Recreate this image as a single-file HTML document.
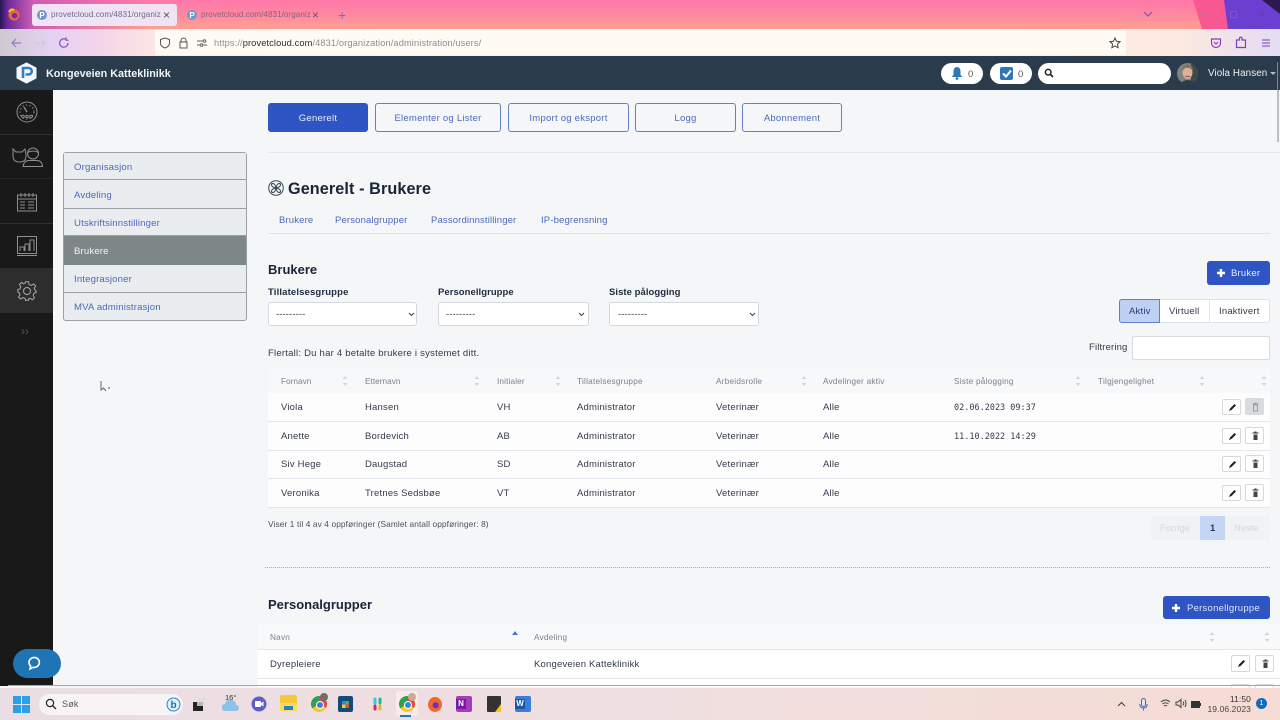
<!DOCTYPE html>
<html><head><meta charset="utf-8">
<style>
html,body{margin:0;padding:0;width:1280px;height:720px;overflow:hidden;background:#f4f6f7}
body{position:relative;font-family:"Liberation Sans","DejaVu Sans",sans-serif;font-size:9.5px;color:#2a3342}
.a{position:absolute}
.t{position:absolute;white-space:nowrap;line-height:0;height:0;transform:translateY(2px)}
.t.k{transform:translateY(1px)}
.tab{font-size:8.1px;letter-spacing:.05px;color:#6d6d8c}
.b{position:absolute;box-sizing:border-box;height:29px;border:1px solid #6580c2;border-radius:3px;text-align:center;line-height:29px;color:#4d6bbf;font-size:9.5px;letter-spacing:.25px;background:#f4f6f7}
.p{background:#2f55c4;border-color:#2f55c4;color:#e8eefc}
.m{position:absolute;left:64px;width:182px;height:27px;box-sizing:border-box;background:#eaedf0;border-bottom:1px solid #9aa0a3;line-height:27px;padding:1px 0 0 10px;color:#4a69bd;font-size:9.6px;letter-spacing:.15px}
.l{font-size:9.5px;color:#4a69bd;letter-spacing:.15px}
.lb{font-size:9.5px;font-weight:bold;color:#1f2a40;letter-spacing:.15px}
.s{position:absolute;top:302px;height:24px;width:149px;box-sizing:border-box;background:#fff;border:1px solid #d5d8dc;border-radius:3px}
.th{font-size:8.2px;color:#79828f;letter-spacing:.25px}
.td{font-size:9.5px;color:#333b4a;letter-spacing:.2px}
.r{position:absolute;left:268px;width:1002px;height:28px;background:#fdfdfd;border-bottom:1px solid #e3e6ea;box-sizing:border-box}
.ib{position:absolute;width:19px;height:16px;box-sizing:border-box;background:#fff;border:1px solid #d6d9dc;border-radius:2px}
.ib svg{position:absolute;left:4px;top:2px}
.mono{font-family:"DejaVu Sans Mono","Liberation Mono",monospace;font-size:8.500px;letter-spacing:0;color:#333b4a}
</style></head><body>

<!-- browser chrome -->
<div class="a" style="left:0;top:0;width:1280px;height:29px;background:linear-gradient(180deg,#ff78a8 0%,#ff86a2 45%,#ffa092 100%)"></div>
<div class="a" style="left:0;top:0;width:150px;height:29px;background:linear-gradient(90deg,#2a1650 0,#6a2a9c 5%,#cf5db4 22%,rgba(255,120,168,0) 100%)"></div>
<svg class="a" style="left:1190px;top:0" width="90" height="29"><path d="M3 0H37L39 29H12Z" fill="#f9578f"/><path d="M34 0H90V29H38Z" fill="#6b3fd0"/><path d="M72 0H90V14Z" fill="#2a1a50"/></svg>
<div class="a" style="left:0;top:29px;width:1280px;height:27px;background:linear-gradient(90deg,#cfc9cf 0,#e3d2f2 4%,#f5d5ea 8%,#ffeedd 14%,#fff3e6 70%,#fde9df 92%,#e3dcf3 100%)"></div>
<div class="a" style="left:155px;top:30px;width:971px;height:25px;background:#fffaf3"></div>
<div class="a" style="left:32px;top:4px;width:145px;height:22px;background:#efe3f5;border-radius:3px"></div>
<svg class="a" style="left:7px;top:8px" width="14" height="14"><circle cx="7" cy="7" r="5.500" fill="#f0692a"/><circle cx="7.600" cy="7.600" r="2.800" fill="#6b2fb5"/><path d="M2 4Q4 0 7 2" stroke="#ffc13a" stroke-width="2" fill="none"/></svg>
<svg class="a" style="left:37px;top:10px" width="10" height="10"><circle cx="5" cy="5" r="5" fill="#6c98cc"/><text x="5" y="8" font-size="8" font-weight="bold" fill="#fff" text-anchor="middle" font-family="Liberation Sans">P</text></svg>
<div class="t k tab" style="left:51px;top:14px">provetcloud.com/4831/organiz</div>
<div class="t k" style="left:163px;top:14px;font-size:12px;color:#555">×</div>
<svg class="a" style="left:187px;top:10px" width="10" height="10"><circle cx="5" cy="5" r="5" fill="#6c98cc"/><text x="5" y="8" font-size="8" font-weight="bold" fill="#fff" text-anchor="middle" font-family="Liberation Sans">P</text></svg>
<div class="t k tab" style="left:201px;top:14px;color:#8a5f7e">provetcloud.com/4831/organiz</div>
<div class="t k" style="left:312px;top:14px;font-size:12px;color:#6d5070">×</div>
<div class="t k" style="left:338px;top:14px;font-size:14px;color:#8a63c8">+</div>
<svg class="a" style="left:1143px;top:10px" width="10" height="8"><path d="M1 2L5 6L9 2" stroke="#8b4fb0" stroke-width="1.200" fill="none"/></svg>
<div class="a" style="left:1199px;top:14px;width:8px;height:1px;background:#d06a98"></div>
<div class="a" style="left:1230px;top:11px;width:7px;height:7px;border:1px solid #9a58b8;box-sizing:border-box;opacity:.7"></div>
<div class="t k" style="left:1259px;top:13px;font-size:9px;color:#5a3a98">×</div>
<svg class="a" style="left:10px;top:37px" width="12" height="12"><path d="M11 6H2M6 2L2 6L6 10" stroke="#8d7fd0" stroke-width="1.200" fill="none"/></svg>
<svg class="a" style="left:35px;top:37px" width="12" height="12"><path d="M1 6H10M6 2L10 6L6 10" stroke="#d5c4ea" stroke-width="1.200" fill="none"/></svg>
<svg class="a" style="left:58px;top:37px" width="12" height="12"><path d="M10 6A4.200 4.200 0 1 1 8 2.400M8 .5V3.200H10.700" stroke="#8e4fc0" stroke-width="1.200" fill="none"/></svg>
<svg class="a" style="left:159px;top:37px" width="12" height="12"><path d="M6 1L10.500 2.500V6Q10.500 9.500 6 11Q1.500 9.500 1.500 6V2.500Z" stroke="#555" stroke-width="1" fill="none"/></svg>
<svg class="a" style="left:178px;top:37px" width="11" height="12"><path d="M3 5V3.500A2.500 2.500 0 0 1 8 3.500V5M2 5H9V11H2Z" stroke="#555" stroke-width="1" fill="none"/></svg>
<svg class="a" style="left:197px;top:38px" width="10" height="10"><path d="M0 3H6M0 7H3M6 7H10" stroke="#666" stroke-width="1"/><circle cx="7.500" cy="3" r="1.300" fill="none" stroke="#666"/><circle cx="4.500" cy="7" r="1.300" fill="none" stroke="#666"/></svg>
<div class="t k" style="left:214px;top:42px;font-size:9.300px;letter-spacing:.1px;color:#8b8f97">https://<span style="color:#2c2c33">provetcloud.com</span>/4831/organization/administration/users/</div>
<svg class="a" style="left:1109px;top:37px" width="12" height="12"><path d="M6 1L7.500 4.300L11 4.700L8.400 7.100L9.100 10.700L6 8.900L2.900 10.700L3.600 7.100L1 4.700L4.500 4.300Z" stroke="#444" stroke-width="1" fill="none"/></svg>
<svg class="a" style="left:1210px;top:37px" width="12" height="12"><path d="M1.500 2H10.500V6A4.500 4.500 0 0 1 1.500 6Z" stroke="#8b3fc0" stroke-width="1.200" fill="none"/><path d="M4 5L6 7L8 5" stroke="#8b3fc0" stroke-width="1.200" fill="none"/></svg>
<svg class="a" style="left:1235px;top:36px" width="12" height="13"><path d="M1.500 4H4.500V2A1.300 1.300 0 0 1 7 2V4H10.500V11.500H1.500Z" stroke="#7b3fc8" stroke-width="1.200" fill="none"/></svg>
<svg class="a" style="left:1261px;top:38px" width="10" height="10"><path d="M1 2H9M1 5H9M1 8H9" stroke="#7b3fc8" stroke-width="1.100"/></svg>

<!-- app top bar -->
<div class="a" style="left:0;top:56px;width:1280px;height:34px;background:#2a3c4b"></div>
<svg class="a" style="left:16px;top:62px" width="21" height="22"><path d="M10.500 1L20 6V16L10.500 21L1 16V6Z" fill="#f5f8fb" stroke="#f5f8fb" stroke-linejoin="round"/><path d="M7 16V6H12.500A3.200 3.200 0 0 1 12.500 12.500H9.500" stroke="#2e80c5" stroke-width="2.600" fill="none"/></svg>
<div class="t" style="left:46px;top:72px;font-size:10.800px;font-weight:bold;color:#f2f5f7">Kongeveien Katteklinikk</div>
<div class="a" style="left:941px;top:63px;width:42px;height:21px;background:#fff;border-radius:11px"></div>
<svg class="a" style="left:950px;top:66px" width="14" height="14"><path d="M7 1Q10.500 1 10.500 6V9L12.500 11H1.500L3.500 9V6Q3.500 1 7 1Z" fill="#2f78b8"/><circle cx="7" cy="12.500" r="1.400" fill="#2f78b8"/></svg>
<div class="t" style="left:968px;top:73px;font-size:9.500px;color:#555">0</div>
<div class="a" style="left:990px;top:63px;width:42px;height:21px;background:#fff;border-radius:11px"></div>
<div class="a" style="left:1000px;top:67px;width:13px;height:13px;background:#2f78b8;border-radius:2px"></div>
<svg class="a" style="left:1000px;top:67px" width="14" height="13"><path d="M3 6.500L6 9.500L11 3.500" stroke="#fff" stroke-width="2" fill="none"/></svg>
<div class="t" style="left:1018px;top:73px;font-size:9.500px;color:#555">0</div>
<div class="a" style="left:1038px;top:63px;width:133px;height:21px;background:#fff;border-radius:11px"></div>
<svg class="a" style="left:1044px;top:68px" width="10" height="10"><circle cx="4.200" cy="4.200" r="2.800" stroke="#222" stroke-width="1.500" fill="none"/><path d="M6.500 6.500L9 9" stroke="#222" stroke-width="1.600"/></svg>
<svg class="a" style="left:1177px;top:63px" width="21" height="21"><defs><clipPath id="av"><circle cx="10.500" cy="10.500" r="10.500"/></clipPath></defs><g clip-path="url(#av)"><rect width="21" height="21" fill="#7c8580"/><rect x="14" width="7" height="21" fill="#3d4a48"/><path d="M4 20Q10 14 19 20V21H4Z" fill="#2c3e3e"/><ellipse cx="10.500" cy="9.500" rx="5" ry="6.500" fill="#d9b09c"/><path d="M5 8Q6 1 11 2Q16 2 16 8Q13 4 8 5Z" fill="#8a6f60"/><path d="M8 13.500H13" stroke="#a5504a" stroke-width="1"/></g></svg>
<div class="t" style="left:1208px;top:72px;font-size:9.800px;color:#eef1f3;letter-spacing:.1px">Viola Hansen</div>
<div class="a" style="left:1270px;top:72px;border:3px solid transparent;border-top-color:#b5bcc2"></div>
<div class="a" style="left:1277px;top:62px;width:1px;height:28px;background:#7b8893"></div>

<!-- sidebar -->
<div class="a" style="left:0;top:90px;width:53px;height:596px;background:#191919"></div>
<div class="a" style="left:0;top:134px;width:53px;height:1px;background:#303030"></div>
<div class="a" style="left:0;top:178px;width:53px;height:1px;background:#262626"></div>
<div class="a" style="left:0;top:223px;width:53px;height:1px;background:#303030"></div>
<div class="a" style="left:0;top:268px;width:53px;height:45px;background:#2d2d2d"></div>
<svg class="a" style="left:16px;top:101px" width="22" height="22" fill="none" stroke="#8f8f8f"><circle cx="11" cy="11" r="10"/><circle cx="11" cy="11" r="7" stroke-dasharray="1.500 2"/><path d="M11 11L8 6" stroke-width="1.300"/><circle cx="7" cy="15.500" r="1.300"/><circle cx="11" cy="15.500" r="1.300"/><circle cx="15" cy="15.500" r="1.300"/></svg>
<svg class="a" style="left:12px;top:146px" width="31" height="22" fill="none" stroke="#8f8f8f"><path d="M1 3L4 6H10L13 3Q14 8 14 10Q14 16 7.500 16Q1 16 1 10Q1 8 1 3Z"/><circle cx="21" cy="7.500" r="5.500"/><path d="M15.500 6.500Q21 3.500 26.500 6.500"/><path d="M11 20.500Q12 14.500 17 14.500H25Q30 14.500 30.500 20.500Z"/></svg>
<svg class="a" style="left:17px;top:192px" width="20" height="20" fill="none" stroke="#8f8f8f"><rect x=".5" y="3" width="19" height="16"/><path d="M0 7H20M4 1V5M8 1V5M12 1V5M16 1V5M3 10H8M11 10H17M3 13H8M11 13H17M3 16H8M11 16H17"/></svg>
<svg class="a" style="left:17px;top:236px" width="20" height="20" fill="none" stroke="#8f8f8f"><rect x=".5" y=".5" width="19" height="17"/><path d="M0 19.500H20"/><path d="M3 15V11H7V15M8 15V8H12V15M13 15V4H17V15"/></svg>
<svg class="a" style="left:17px;top:281px" width="20" height="20" fill="none" stroke="#a8a8a8"><circle cx="10" cy="10" r="3.500"/><path d="M8.500 .8H11.500L12 3.400L14.400 4.400L16.600 2.900L18.700 5L17.200 7.200L18.200 9.600L19.200 10.100V11.500L17 12.200L16.200 14.600L17.500 16.800L15.400 18.800L13.200 17.300L11.500 18V19.300H8.500L8 17.400L5.800 16.600L3.600 18L1.500 16L3 13.800L2 11.500L.8 11V8.500L3 8L3.800 5.600L2.400 3.400L4.500 1.400L6.700 2.800L8 2.300Z"/></svg>
<div class="t k" style="left:21px;top:330px;font-size:12px;color:#555;letter-spacing:0">››</div>
<div class="a" style="left:13px;top:649px;width:48px;height:29px;background:#1f74b4;border-radius:15px"></div>
<svg class="a" style="left:27px;top:656px" width="15" height="15" fill="none" stroke="#fff" stroke-width="1.600"><path d="M3 13L3.600 10Q2 8.500 2 6.500A5.200 5 0 1 1 6 11.300Z"/></svg>

<!-- left menu -->
<div class="a" style="left:63px;top:152px;width:184px;height:169px;box-sizing:border-box;border:1px solid #9aa0a3;border-radius:3px;background:#eaedf0;overflow:hidden"></div>
<div class="m" style="top:153px">Organisasjon</div>
<div class="m" style="top:181px;height:28px">Avdeling</div>
<div class="m" style="top:209px;height:27px">Utskriftsinnstillinger</div>
<div class="m" style="top:236px;height:29px;background:#7d8788;color:#f2f4f4;border:0;line-height:29px">Brukere</div>
<div class="m" style="top:265px;height:28px">Integrasjoner</div>
<div class="m" style="top:293px;height:27px;border-bottom:0;border-radius:0 0 3px 3px">MVA administrasjon</div>

<!-- top buttons -->
<div class="b p" style="left:268px;top:103px;width:100px">Generelt</div>
<div class="b" style="left:375px;top:103px;width:126px">Elementer og Lister</div>
<div class="b" style="left:508px;top:103px;width:121px">Import og eksport</div>
<div class="b" style="left:635px;top:103px;width:101px">Logg</div>
<div class="b" style="left:742px;top:103px;width:100px">Abonnement</div>
<div class="a" style="left:268px;top:152px;width:1012px;height:1px;background:#e6e9eb"></div>

<!-- heading -->
<svg class="a" style="left:268px;top:180px" width="16" height="16" fill="none" stroke="#3a4456"><circle cx="8" cy="8" r="7.300"/><path d="M8 8Q3.500 7 3.500 5Q3.500 3.500 5 3.500Q7 3.500 8 8Q9 3.500 11 3.500Q12.500 3.500 12.500 5Q12.500 7 8 8Q12.500 9 12.500 11Q12.500 12.500 11 12.500Q9 12.500 8 8Q7 12.500 5 12.500Q3.500 12.500 3.500 11Q3.500 9 8 8Z"/></svg>
<div class="t k" style="left:288px;top:188px;font-size:16.200px;font-weight:bold;color:#1a2338;letter-spacing:.1px">Generelt - Brukere</div>
<div class="t l" style="left:279px;top:219px">Brukere</div>
<div class="t l" style="left:335px;top:219px">Personalgrupper</div>
<div class="t l" style="left:431px;top:219px">Passordinnstillinger</div>
<div class="t l" style="left:541px;top:219px">IP-begrensning</div>
<div class="a" style="left:268px;top:233px;width:1002px;height:1px;background:#e0e3e6"></div>

<div class="t" style="left:268px;top:268px;font-size:13px;font-weight:bold;color:#1a2338">Brukere</div>
<div class="a" style="left:1207px;top:261px;width:63px;height:24px;background:#2f55c4;border-radius:3px"></div>
<svg class="a" style="left:1216px;top:268px" width="10" height="10"><path d="M5 1V9M1 5H9" stroke="#fff" stroke-width="2.400"/></svg>
<div class="t" style="left:1231px;top:272px;font-size:9.500px;color:#e8eefc;letter-spacing:.2px">Bruker</div>

<div class="t lb" style="left:268px;top:291px">Tillatelsesgruppe</div>
<div class="t lb" style="left:438px;top:291px;letter-spacing:.05px">Personellgruppe</div>
<div class="t lb" style="left:609px;top:291px;letter-spacing:.05px">Siste pålogging</div>
<div class="s" style="left:268px"></div><div class="s" style="left:438px;width:151px"></div><div class="s" style="left:609px;width:150px"></div>
<div class="t td" style="left:276px;top:313px;letter-spacing:.1px">---------</div>
<div class="t td" style="left:446px;top:313px;letter-spacing:.1px">---------</div>
<div class="t td" style="left:618px;top:313px;letter-spacing:.1px">---------</div>
<svg class="a" style="left:408px;top:312px" width="7" height="5"><path d="M1 1L3.500 3.500L6 1" stroke="#444" stroke-width="1.100" fill="none"/></svg>
<svg class="a" style="left:578px;top:312px" width="7" height="5"><path d="M1 1L3.500 3.500L6 1" stroke="#444" stroke-width="1.100" fill="none"/></svg>
<svg class="a" style="left:749px;top:312px" width="7" height="5"><path d="M1 1L3.500 3.500L6 1" stroke="#444" stroke-width="1.100" fill="none"/></svg>

<!-- active group -->
<div class="a" style="left:1119px;top:299px;width:151px;height:24px;box-sizing:border-box;background:#fff;border:1px solid #e0e3e6;border-radius:3px"></div>
<div class="a" style="left:1119px;top:299px;width:41px;height:24px;box-sizing:border-box;background:#bfd0f5;border:1px solid #5f7ecb;border-radius:3px 0 0 3px"></div>
<div class="a" style="left:1209px;top:299px;width:1px;height:24px;background:#e0e3e6"></div>
<div class="t td" style="left:1129px;top:310px;color:#27406f">Aktiv</div>
<div class="t td" style="left:1169px;top:310px">Virtuell</div>
<div class="t td" style="left:1219px;top:310px">Inaktivert</div>

<div class="t td" style="left:268px;top:352px;letter-spacing:.23px">Flertall: Du har 4 betalte brukere i systemet ditt.</div>
<div class="t td" style="left:1089px;top:346px;letter-spacing:.15px">Filtrering</div>
<div class="a" style="left:1132px;top:336px;width:138px;height:24px;box-sizing:border-box;background:#fff;border:1px solid #d8dbdf;border-radius:2px"></div>

<!-- users table -->
<div class="a" style="left:268px;top:368px;width:1002px;height:25px;background:#f6f8f9"></div>
<div class="t th" style="left:281px;top:380px;letter-spacing:.05px">Fornavn</div>
<div class="t th" style="left:365px;top:380px;letter-spacing:.05px">Etternavn</div>
<div class="t th" style="left:497px;top:380px;letter-spacing:.15px">Initialer</div>
<div class="t th" style="left:577px;top:380px">Tillatelsesgruppe</div>
<div class="t th" style="left:716px;top:380px">Arbeidsrolle</div>
<div class="t th" style="left:823px;top:380px">Avdelinger aktiv</div>
<div class="t th" style="left:954px;top:380px">Siste pålogging</div>
<div class="t th" style="left:1098px;top:380px">Tilgjengelighet</div>
<svg class="a" style="left:340px;top:376px" width="930" height="10" fill="#d3d7db"><path transform="translate(3)" d="M2 0L4.500 3H-.5ZM2 10L4.500 7H-.5Z"/><path transform="translate(135)" d="M2 0L4.500 3H-.5ZM2 10L4.500 7H-.5Z"/><path transform="translate(216)" d="M2 0L4.500 3H-.5ZM2 10L4.500 7H-.5Z"/><path transform="translate(462)" d="M2 0L4.500 3H-.5ZM2 10L4.500 7H-.5Z"/><path transform="translate(736)" d="M2 0L4.500 3H-.5ZM2 10L4.500 7H-.5Z"/><path transform="translate(860)" d="M2 0L4.500 3H-.5ZM2 10L4.500 7H-.5Z"/><path transform="translate(922)" d="M2 0L4.500 3H-.5ZM2 10L4.500 7H-.5Z"/></svg>

<div class="r" style="top:393px;height:29px"></div>
<div class="r" style="top:422px;height:29px"></div>
<div class="r" style="top:451px;height:28px"></div>
<div class="r" style="top:479px;height:29px"></div>

<div class="t td" style="left:281px;top:406px">Viola</div><div class="t td" style="left:365px;top:406px">Hansen</div><div class="t td" style="left:497px;top:406px">VH</div><div class="t td" style="left:577px;top:406px">Administrator</div><div class="t td" style="left:716px;top:406px">Veterinær</div><div class="t td" style="left:823px;top:406px">Alle</div>
<div class="t mono" style="left:954px;top:406px">02.06.2023 09:37</div>
<div class="t td" style="left:281px;top:435px">Anette</div><div class="t td" style="left:365px;top:435px">Bordevich</div><div class="t td" style="left:497px;top:435px">AB</div><div class="t td" style="left:577px;top:435px">Administrator</div><div class="t td" style="left:716px;top:435px">Veterinær</div><div class="t td" style="left:823px;top:435px">Alle</div>
<div class="t mono" style="left:954px;top:435px">11.10.2022 14:29</div>
<div class="t td" style="left:281px;top:463px">Siv Hege</div><div class="t td" style="left:365px;top:463px">Daugstad</div><div class="t td" style="left:497px;top:463px">SD</div><div class="t td" style="left:577px;top:463px">Administrator</div><div class="t td" style="left:716px;top:463px">Veterinær</div><div class="t td" style="left:823px;top:463px">Alle</div>
<div class="t td" style="left:281px;top:492px">Veronika</div><div class="t td" style="left:365px;top:492px">Tretnes Sedsbøe</div><div class="t td" style="left:497px;top:492px">VT</div><div class="t td" style="left:577px;top:492px">Administrator</div><div class="t td" style="left:716px;top:492px">Veterinær</div><div class="t td" style="left:823px;top:492px">Alle</div>

<!-- row buttons -->
<div class="ib" style="left:1222px;top:399px"><svg width="11" height="11"><path d="M2 9L3 6.500L7.500 2L9 3.500L4.500 8Z" fill="#222"/></svg></div>
<div class="ib" style="left:1245px;top:398px;height:17px;background:#d9dcde;border-color:#d9dcde"><svg width="11" height="11"><path d="M2.500 3H8.500M4.500 2H6.500M3.500 4H7.500V10H3.500Z" stroke="#9ba1a3" fill="none"/></svg></div>
<div class="ib" style="left:1222px;top:428px"><svg width="11" height="11"><path d="M2 9L3 6.500L7.500 2L9 3.500L4.500 8Z" fill="#222"/></svg></div>
<div class="ib" style="left:1245px;top:427px;height:17px"><svg width="11" height="11"><path d="M2.500 3H8.500M4.500 2H6.500" stroke="#333"/><path d="M3.500 4.500H7.500V10H3.500Z" fill="#444"/></svg></div>
<div class="ib" style="left:1222px;top:456px"><svg width="11" height="11"><path d="M2 9L3 6.500L7.500 2L9 3.500L4.500 8Z" fill="#222"/></svg></div>
<div class="ib" style="left:1245px;top:455px;height:17px"><svg width="11" height="11"><path d="M2.500 3H8.500M4.500 2H6.500" stroke="#333"/><path d="M3.500 4.500H7.500V10H3.500Z" fill="#444"/></svg></div>
<div class="ib" style="left:1222px;top:485px"><svg width="11" height="11"><path d="M2 9L3 6.500L7.500 2L9 3.500L4.500 8Z" fill="#222"/></svg></div>
<div class="ib" style="left:1245px;top:484px;height:17px"><svg width="11" height="11"><path d="M2.500 3H8.500M4.500 2H6.500" stroke="#333"/><path d="M3.500 4.500H7.500V10H3.500Z" fill="#444"/></svg></div>

<div class="t k" style="left:268px;top:523px;font-size:8.300px;color:#4a5260;letter-spacing:.12px">Viser 1 til 4 av 4 oppføringer (Samlet antall oppføringer: 8)</div>
<div class="a" style="left:1151px;top:516px;width:119px;height:24px;background:#f0f2f4;border-radius:2px"></div>
<div class="a" style="left:1200px;top:516px;width:25px;height:24px;background:#c5d5f5"></div>
<div class="t" style="left:1160px;top:527px;font-size:9.500px;color:#d3d7dc">Forrige</div>
<div class="t" style="left:1210px;top:527px;font-size:9.500px;font-weight:bold;color:#2a3a5c">1</div>
<div class="t" style="left:1234px;top:527px;font-size:9.500px;color:#d3d7dc">Neste</div>

<div class="a" style="left:265px;top:567px;width:1005px;border-top:1.500px dotted #a3a9ae"></div>

<!-- personalgrupper -->
<div class="t" style="left:268px;top:603px;font-size:13px;font-weight:bold;color:#1a2338">Personalgrupper</div>
<div class="a" style="left:1163px;top:596px;width:107px;height:23px;background:#2f55c4;border-radius:3px"></div>
<svg class="a" style="left:1171px;top:603px" width="10" height="10"><path d="M5 1V9M1 5H9" stroke="#fff" stroke-width="2.400"/></svg>
<div class="t" style="left:1187px;top:607px;font-size:9.500px;color:#dbe4fa;letter-spacing:.25px">Personellgruppe</div>
<div class="a" style="left:258px;top:624px;width:1022px;height:25px;background:#f7f9fa;border-bottom:1px solid #e3e6ea"></div>
<div class="t th" style="left:270px;top:636px">Navn</div>
<div class="t th" style="left:534px;top:636px">Avdeling</div>
<svg class="a" style="left:512px;top:631px" width="6" height="5"><path d="M3 0L6 4H0Z" fill="#4f71c8"/></svg>
<svg class="a" style="left:1209px;top:632px" width="62" height="10" fill="#d3d7db"><path d="M3 0L5.500 3H.5ZM3 10L5.500 7H.5Z"/><path transform="translate(55)" d="M3 0L5.500 3H.5ZM3 10L5.500 7H.5Z"/></svg>
<div class="a" style="left:258px;top:650px;width:1022px;height:28px;background:#fff;border-bottom:1px solid #e3e6ea"></div>
<div class="t td" style="left:270px;top:663px">Dyrepleiere</div>
<div class="t td" style="left:534px;top:663px">Kongeveien Katteklinikk</div>
<div class="ib" style="left:1231px;top:655px;height:17px"><svg width="11" height="11"><path d="M2 9L3 6.500L7.500 2L9 3.500L4.500 8Z" fill="#222"/></svg></div>
<div class="ib" style="left:1255px;top:655px;height:17px"><svg width="11" height="11"><path d="M2.500 3H8.500M4.500 2H6.500" stroke="#333"/><path d="M3.500 4.500H7.500V10H3.500Z" fill="#444"/></svg></div>
<div class="a" style="left:258px;top:679px;width:1022px;height:8px;background:#fff"></div>
<div class="ib" style="left:1231px;top:684px;height:4px;border-bottom:0"></div>
<div class="ib" style="left:1255px;top:684px;height:4px;border-bottom:0"></div>

<div class="a" style="left:1277px;top:90px;width:2px;height:52px;background:#b9bfc4"></div>

<!-- windows taskbar -->
<div class="a" style="left:8px;top:685px;width:1272px;height:1px;background:#a4a5a5"></div>
<div class="a" style="left:0;top:688px;width:1280px;height:32px;background:linear-gradient(90deg,#eadde3 0,#f0dfe0 50%,#f6dcd4 100%)"></div>
<svg class="a" style="left:13px;top:696px" width="17" height="17" fill="#2aa0e8"><rect width="8" height="8"/><rect x="9" width="8" height="8"/><rect y="9" width="8" height="8"/><rect x="9" y="9" width="8" height="8"/></svg>
<div class="a" style="left:39px;top:694px;width:144px;height:21px;background:#f8f4f5;border-radius:11px"></div>
<svg class="a" style="left:45px;top:698px" width="12" height="12"><circle cx="5" cy="5" r="3.600" stroke="#222" stroke-width="1.200" fill="none"/><path d="M7.500 7.500L11 11" stroke="#222" stroke-width="1.300"/></svg>
<div class="t k" style="left:62px;top:703px;font-size:9px;color:#555;letter-spacing:.2px">Søk</div>
<svg class="a" style="left:166px;top:696px" width="15" height="17"><circle cx="7.500" cy="8.500" r="6.500" fill="#dff0fa" stroke="#2a85c8"/><text x="7.500" y="12" text-anchor="middle" font-size="10" font-weight="bold" fill="#1b6fb0" font-family="Liberation Sans">b</text></svg>
<div class="a" style="left:193px;top:702px;width:10px;height:9px;background:#222"></div>
<div class="a" style="left:197px;top:698px;width:8px;height:8px;background:#ddd;opacity:.8"></div>
<svg class="a" style="left:222px;top:693px" width="17" height="20"><path d="M3 18A3.500 3.500 0 0 1 3 11Q4 6 9 7Q14 7 14 12A3 3 0 0 1 14 18Z" fill="#8cc3ea"/><text x="3" y="7" font-size="7.500" fill="#333" font-family="Liberation Sans">16°</text></svg>
<svg class="a" style="left:251px;top:696px" width="16" height="16"><circle cx="8" cy="8" r="7.500" fill="#5b5fc7"/><rect x="4" y="5" width="6" height="6" rx="1" fill="#fff"/><path d="M10 7L12.500 5.500V10.500L10 9Z" fill="#fff"/></svg>
<div class="a" style="left:280px;top:695px;width:17px;height:8px;background:#f5c93a;border-radius:2px 2px 0 0"></div>
<div class="a" style="left:280px;top:703px;width:17px;height:8px;background:#fbd95b"></div>
<div class="a" style="left:284px;top:706px;width:9px;height:4px;background:#2a80c5"></div>
<div class="a" style="left:311px;top:696px;width:16px;height:16px;border-radius:50%;background:conic-gradient(#e8493a 0 33%,#f7c52c 33% 66%,#2ea04f 66% 100%)"></div>
<div class="a" style="left:316px;top:701px;width:6px;height:6px;border-radius:50%;background:#3b82d6;border:1px solid #fff"></div>
<div class="a" style="left:320px;top:693px;width:8px;height:8px;border-radius:50%;background:#7a6a62"></div>
<div class="a" style="left:338px;top:696px;width:15px;height:16px;background:#144a7a;border-radius:2px"></div>
<div class="a" style="left:342px;top:701px;width:7px;height:7px;background:conic-gradient(#4caf50 0 25%,#e8493a 25% 50%,#f7c52c 50% 75%,#2a85e0 75% 100%)"></div>
<svg class="a" style="left:370px;top:696px" width="15" height="16" fill="none" stroke-width="3" stroke-linecap="round"><path d="M5 3V7" stroke="#36c5f0"/><path d="M10 3V7" stroke="#2eb67d"/><path d="M5 10V13" stroke="#e01e5a"/><path d="M10 10V13" stroke="#ecb22e"/></svg>
<div class="a" style="left:396px;top:691px;width:22px;height:25px;background:#f7ecea;border-radius:3px"></div>
<div class="a" style="left:399px;top:696px;width:16px;height:16px;border-radius:50%;background:conic-gradient(#e8493a 0 33%,#f7c52c 33% 66%,#2ea04f 66% 100%)"></div>
<div class="a" style="left:404px;top:701px;width:6px;height:6px;border-radius:50%;background:#3b82d6;border:1px solid #fff"></div>
<div class="a" style="left:408px;top:693px;width:8px;height:8px;border-radius:50%;background:#c9a894"></div>
<div class="a" style="left:400px;top:715px;width:11px;height:2px;background:#2673b5"></div>
<div class="a" style="left:428px;top:697px;width:14px;height:15px;border-radius:50%;background:radial-gradient(circle at 55% 55%,#7a2fb0 0 25%,#f0692a 30%,#f0692a 70%,#f75a3e 100%)"></div>
<div class="a" style="left:456px;top:696px;width:16px;height:16px;background:#a33fb5;border-radius:2px"></div>
<div class="a" style="left:456px;top:699px;width:10px;height:10px;background:#7719aa;color:#fff;font-size:8px;font-weight:bold;text-align:center;line-height:10px">N</div>
<div class="a" style="left:487px;top:696px;width:14px;height:16px;background:#333;border-radius:1px"></div>
<svg class="a" style="left:487px;top:696px" width="14" height="16"><path d="M14 8V16H8Z" fill="#f5c518"/></svg>
<div class="a" style="left:515px;top:696px;width:16px;height:16px;background:#3a7fd5;border-radius:2px"></div>
<div class="a" style="left:515px;top:699px;width:10px;height:10px;background:#1d56a8;color:#fff;font-size:8px;font-weight:bold;text-align:center;line-height:10px">W</div>
<svg class="a" style="left:1117px;top:701px" width="9" height="6"><path d="M1 5L4.500 1.500L8 5" stroke="#444" stroke-width="1.100" fill="none"/></svg>
<svg class="a" style="left:1139px;top:698px" width="9" height="13"><rect x="2.500" y=".5" width="4" height="8" rx="2" stroke="#4a69a8" fill="#dde4f2"/><path d="M.8 6Q.8 10 4.500 10Q8.200 10 8.200 6M4.500 10V12.500" stroke="#4a69a8" fill="none"/></svg>
<svg class="a" style="left:1160px;top:698px" width="11" height="11" fill="none" stroke="#444"><path d="M1 4Q5.500 0 10 4M2.500 6Q5.500 3.500 8.500 6M4 8Q5.500 7 7 8"/></svg>
<svg class="a" style="left:1175px;top:698px" width="12" height="11" fill="none" stroke="#444"><path d="M1 4H3L6 1.500V9.500L3 7H1ZM8 3.500Q9.500 5.500 8 7.500M10 2Q12 5.500 10 9"/></svg>
<div class="a" style="left:1191px;top:701px;width:9px;height:7px;background:#333"></div>
<div class="a" style="left:1200px;top:703px;width:1px;height:3px;background:#333"></div>
<div class="t k" style="right:29px;top:698px;font-size:8.500px;color:#333;letter-spacing:.1px">11:50</div>
<div class="t k" style="right:29px;top:708px;font-size:8.500px;color:#444;letter-spacing:.1px">19.06.2023</div>
<div class="a" style="left:1256px;top:698px;width:11px;height:11px;border-radius:50%;background:#0f6cbd;color:#fff;font-size:7px;text-align:center;line-height:11px">1</div>

<!-- cursor -->
<svg class="a" style="left:100px;top:380px" width="11" height="13"><path d="M1 1V10L3.500 8L6 11" stroke="#666" fill="none"/><path d="M8 8H10M9 7V9" stroke="#888"/></svg>
</body></html>
